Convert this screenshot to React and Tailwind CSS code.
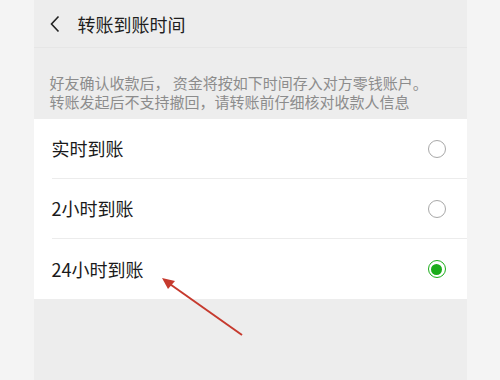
import React from "react";

const options = [
  { label: "实时到账", checked: false },
  { label: "2小时到账", checked: false },
  { label: "24小时到账", checked: true },
];

function Radio({ checked }) {
  if (checked) {
    return (
      <div className="w-[18px] h-[18px] rounded-full border-[1.5px] border-[#1aad19] flex items-center justify-center">
        <div className="w-[11px] h-[11px] rounded-full bg-[#1aad19]" />
      </div>
    );
  }
  return <div className="w-[18px] h-[18px] rounded-full border-[1.5px] border-[#a8a8a8]" />;
}

export default function App() {
  return (
    <div className="w-[500px] h-[380px] bg-[#f4f4f4] flex justify-center overflow-hidden" style={{ fontFamily: '"Noto Sans CJK SC", "Noto Sans", sans-serif' }}>
      <div className="relative w-[433px] h-full bg-[#ededed] flex flex-col">
        <div className="h-[48px] shrink-0 flex items-center pl-[15px] border-b border-[#e6e6e6]">
          <svg width="12" height="18" viewBox="0 0 12 18" className="mr-[17px]">
            <path d="M9.5 1.5 L2.5 9 L9.5 16.5" fill="none" stroke="#222" strokeWidth="1.6" />
          </svg>
          <span className="text-[18px] leading-none text-[#1e1e1e]">转账到账时间</span>
        </div>
        <div className="pt-[25px] pl-[16px] text-[15px] leading-[19px] text-[#8c8c8c] h-[71px] shrink-0">
          <div>好友确认收款后， 资金将按如下时间存入对方零钱账户。</div>
          <div>转账发起后不支持撤回，请转账前仔细核对收款人信息</div>
        </div>
        <div className="bg-white">
          {options.map((o, i) => (
            <div key={o.label} className="pl-[18px]">
              <div className={`h-[60px] flex items-center justify-between pr-[21px] ${i < options.length - 1 ? "border-b border-[#ececec]" : ""}`}>
                <span className="text-[18px] text-[#1a1a1a]">{o.label}</span>
                <Radio checked={o.checked} />
              </div>
            </div>
          ))}
        </div>
        <svg className="absolute left-0 top-0 pointer-events-none" width="433" height="380">
          <line x1="208" y1="335" x2="133" y2="282" stroke="#c63a2e" strokeWidth="2" />
          <polygon points="128,278 141,281 134,289" fill="#c63a2e" />
        </svg>
      </div>
    </div>
  );
}
